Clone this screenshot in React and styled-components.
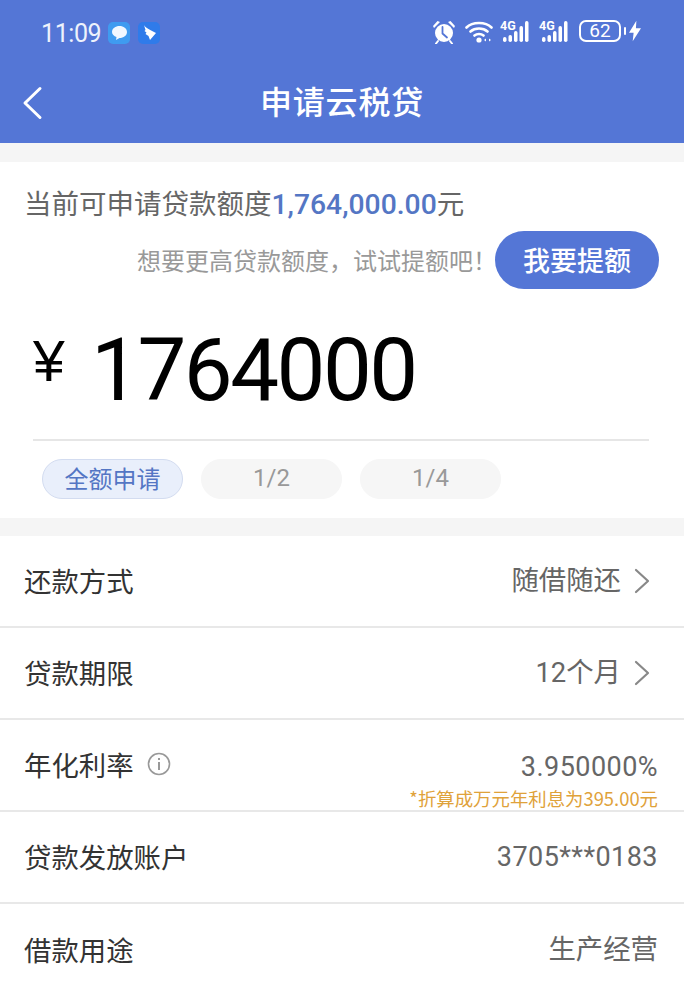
import React from "react";
import styled, { createGlobalStyle } from "styled-components";

const CJK = `"Noto Sans CJK SC", "Noto Sans", sans-serif`;
const NUM = `Roboto, "Noto Sans CJK SC", sans-serif`;

const Global = createGlobalStyle`
  html, body { margin: 0; padding: 0; background: #fff; }
  body { font-family: ${CJK}; overflow: hidden; }
  * { box-sizing: border-box; }
`;

const Page = styled.div`
  width: 684px;
  height: 992px;
  overflow: hidden;
  background: #f5f5f5;
  display: flex;
  flex-direction: column;
`;

const Header = styled.header`
  height: 143px;
  flex: none;
  background: #5476d6;
  color: #fff;
  display: flex;
  flex-direction: column;
`;

const StatusBar = styled.div`
  height: 63px;
  padding: 2px 43px 0 41px;
  display: flex;
  align-items: center;
  justify-content: space-between;
`;

const StatusLeft = styled.div`
  display: flex;
  align-items: center;
`;

const Time = styled.span`
  font: 400 25px/1 ${NUM};
  letter-spacing: -0.4px;
  color: #eef2fc;
  margin: 2px 7px 0 0;
`;

const AppBadge = styled.span`
  width: 22px;
  height: 22px;
  border-radius: 5px;
  background: ${(p) => p.$bg};
  display: flex;
  align-items: center;
  justify-content: center;
  margin-right: 8px;
`;

const StatusRight = styled.div`
  display: flex;
  align-items: center;
  gap: 7px;
  margin-top: -3px;
`;

const Battery = styled.span`
  width: 42px;
  height: 22px;
  border: 2px solid #fff;
  border-radius: 7px;
  font: 400 19px/18px ${NUM};
  text-align: center;
  color: #fff;
  position: relative;
  margin-left: 1px;
  margin-right: 1px;
  &::after {
    content: "";
    position: absolute;
    right: -7px;
    top: 5px;
    width: 2px;
    height: 8px;
    background: #fff;
    border-radius: 1px;
  }
`;

const NavBar = styled.div`
  height: 80px;
  padding-left: 21px;
  display: flex;
  align-items: center;
  position: relative;
`;

const Title = styled.h1`
  position: absolute;
  left: 0;
  right: 0;
  top: 15px;
  margin: 0;
  text-align: center;
  font: 500 32px/44px ${CJK};
  letter-spacing: 0.8px;
  color: #fff;
`;

const Card = styled.section`
  margin-top: 19px;
  height: 356px;
  flex: none;
  background: #fff;
  display: flex;
  flex-direction: column;
`;

const QuotaLine = styled.div`
  padding: 21px 24px 0;
  font: 400 27.500px/38px ${CJK};
  color: #666;
  white-space: nowrap;
`;

const QuotaValue = styled.span`
  color: #5476c4;
  font-family: ${NUM};
  font-weight: 500;
  font-size: 28.300px;
`;

const RaiseRow = styled.div`
  margin-top: 7px;
  padding-right: 25px;
  display: flex;
  align-items: center;
  justify-content: flex-end;
`;

const RaiseHint = styled.span`
  font: 400 24px/34px ${CJK};
  color: #999;
  margin-right: -2px;
`;

const RaiseButton = styled.button`
  width: 164px;
  height: 58px;
  padding: 0;
  border: 0;
  border-radius: 29px;
  background: #5476d6;
  color: #fff;
  font: 500 27px/58px ${CJK};
`;

const AmountRow = styled.div`
  margin: 30px 35px 0 33px;
  height: 122px;
  border-bottom: 2px solid #e6e6e6;
  display: flex;
  align-items: flex-start;
`;

const Currency = styled.span`
  font: 400 57px/85px "Liberation Sans", sans-serif;
  color: #000;
  width: 58px;
`;

const Amount = styled.span`
  font: 400 87px/102px ${NUM};
  color: #000;
  letter-spacing: -2.500px;
`;

const Chips = styled.div`
  margin: 18px 0 0 42px;
  display: flex;
  gap: 18px;
`;

const Chip = styled.span`
  width: 141px;
  height: 40px;
  padding-bottom: 3px;
  border-radius: 20px;
  display: flex;
  align-items: center;
  justify-content: center;
  font: 400 24px/1 ${(p) => (p.$active ? CJK : NUM)};
  color: ${(p) => (p.$active ? "#5476c4" : "#999")};
  background: ${(p) => (p.$active ? "#e9effb" : "#f6f6f6")};
  border: 1px solid ${(p) => (p.$active ? "#d3dcf0" : "#f6f6f6")};
`;

const List = styled.section`
  margin-top: 18px;
  flex: 1;
  background: #fff;
`;

const Row = styled.div`
  height: 92px;
  padding: 0 ${(p) => (p.$arrow ? "33px" : "26px")} 3px 24px;
  border-bottom: 2px solid #e8e8e8;
  display: flex;
  align-items: center;
  justify-content: space-between;
  position: relative;
  &:last-child { border-bottom: 0; }
`;

const Label = styled.span`
  font: 400 27.400px/38px ${CJK};
  color: #333;
  display: flex;
  align-items: center;
  gap: 13px;
`;

const Value = styled.span`
  font: 400 ${(p) => (p.$num ? "27px" : "27.400px")}/38px ${NUM};
  color: #666;
  display: flex;
  align-items: center;
  gap: 12px;
  letter-spacing: ${(p) => (p.$num ? "0.450px" : "0")};
  margin-top: ${(p) => (p.$noted ? "7px" : "3px")};
`;

const Note = styled.span`
  position: absolute;
  right: 26px;
  top: 67px;
  font: 400 18.400px/22px ${CJK};
  color: #dfa23a;
`;

const AlarmIcon = styled.svg`
  margin-right: 2px;
`;

const Back = () => (
  <svg width="24" height="36" viewBox="0 0 24 36" fill="none">
    <path d="M19 3.500L4 18l15 14.500" stroke="#fff" strokeWidth="3" strokeLinecap="round" strokeLinejoin="round" />
  </svg>
);

const Chevron = () => (
  <svg width="18" height="26" viewBox="0 0 18 26" fill="none">
    <path d="M3 2l12 11L3 24" stroke="#888" strokeWidth="2.200" strokeLinecap="round" strokeLinejoin="round" />
  </svg>
);

const Info = () => (
  <svg width="24" height="24" viewBox="0 0 24 24" fill="none">
    <circle cx="12" cy="12" r="10.500" stroke="#999" strokeWidth="1.600" />
    <rect x="11" y="10" width="2" height="8" fill="#999" />
    <rect x="11" y="6" width="2" height="2" fill="#999" />
  </svg>
);

const Alarm = () => (
  <AlarmIcon width="24" height="25" viewBox="0 0 24 25">
    <circle cx="12" cy="14" r="9" fill="#fff" />
    <path d="M10.500 8v6.500l4.500 4" stroke="#5476d6" strokeWidth="1.800" fill="none" strokeLinecap="round" />
    <path d="M1 7l4.500-5 2.500 1-6 6zM23 7l-4.500-5-2.500 1 6 6z" fill="#fff" />
    <path d="M6 22l-2 2.500M18 22l2 2.500" stroke="#fff" strokeWidth="2" strokeLinecap="round" />
  </AlarmIcon>
);

const Wifi = () => (
  <svg width="28" height="24" viewBox="0 0 28 24" fill="none">
    <path d="M1.500 8.500c6-6 19-6 25 0M5.500 12.500c4.500-4 12.500-4 17 0M9.500 16.500c2.500-2 6.500-2 9 0" stroke="#fff" strokeWidth="2.600" strokeLinecap="round" />
    <circle cx="14" cy="21" r="2.600" fill="#fff" />
    <path d="M21 19.500v3l-2-1.500zM24 19.500v3l2-1.500z" fill="#fff" />
  </svg>
);

const Signal = () => (
  <svg width="32" height="24" viewBox="0 0 32 24" fill="#fff">
    <text x="0" y="11" fontSize="12.500" fontWeight="700" fontFamily="Roboto, sans-serif">4G</text>
    <rect x="3" y="18" width="3.500" height="5" rx="1.700" />
    <rect x="8.500" y="16" width="3.500" height="7" rx="1.700" />
    <rect x="14" y="12" width="3.500" height="11" rx="1.700" />
    <rect x="19.500" y="7" width="3.500" height="16" rx="1.700" />
    <rect x="25" y="2" width="3.500" height="21" rx="1.700" />
  </svg>
);

const Bolt = () => (
  <svg width="12" height="22" viewBox="0 0 13 22" fill="#fff">
    <path d="M8 0L0 13h5l-1 9 9-14H7.500z" />
  </svg>
);

const Bubble = () => (
  <svg width="15" height="14" viewBox="0 0 15 14" fill="#f2f8ff">
    <path d="M7.500 0C11.500 0 15 2.500 15 6s-3.500 6-7.500 6L4 14l.5-3C2 10 0 8.500 0 6c0-3.500 3.500-6 7.500-6z" />
  </svg>
);

const Wing = () => (
  <svg width="15" height="16" viewBox="0 0 15 16" fill="#fff">
    <path d="M2 0c1 3 7 5 12 8l-6 7-1.500-4L3.500 9l1-1.500L2.500 6 3.500 5z" />
  </svg>
);

const rows = [
  { label: "还款方式", value: "随借随还", arrow: true },
  { label: "贷款期限", value: "12个月", arrow: true },
  { label: "年化利率", value: "3.950000%", num: true, info: true, note: "*折算成万元年利息为395.00元" },
  { label: "贷款发放账户", value: "3705***0183", num: true },
  { label: "借款用途", value: "生产经营" },
];

export default function App() {
  return (
    <Page>
      <Global />
      <Header>
        <StatusBar>
          <StatusLeft>
            <Time>11:09</Time>
            <AppBadge $bg="#3f9bf0"><Bubble /></AppBadge>
            <AppBadge $bg="#2f7bea"><Wing /></AppBadge>
          </StatusLeft>
          <StatusRight>
            <Alarm />
            <Wifi />
            <Signal />
            <Signal />
            <Battery>62</Battery>
            <Bolt />
          </StatusRight>
        </StatusBar>
        <NavBar>
          <Back />
          <Title>申请云税贷</Title>
        </NavBar>
      </Header>
      <Card>
        <QuotaLine>
          当前可申请贷款额度<QuotaValue>1,764,000.00</QuotaValue>元
        </QuotaLine>
        <RaiseRow>
          <RaiseHint>想要更高贷款额度，试试提额吧！</RaiseHint>
          <RaiseButton>我要提额</RaiseButton>
        </RaiseRow>
        <AmountRow>
          <Currency>¥</Currency>
          <Amount>1764000</Amount>
        </AmountRow>
        <Chips>
          <Chip $active>全额申请</Chip>
          <Chip>1/2</Chip>
          <Chip>1/4</Chip>
        </Chips>
      </Card>
      <List>
        {rows.map((r) => (
          <Row key={r.label} $arrow={r.arrow}>
            <Label>
              {r.label}
              {r.info && <Info />}
            </Label>
            <Value $noted={!!r.note} $num={r.num}>
              {r.value}
              {r.arrow && <Chevron />}
            </Value>
            {r.note && <Note>{r.note}</Note>}
          </Row>
        ))}
      </List>
    </Page>
  );
}
